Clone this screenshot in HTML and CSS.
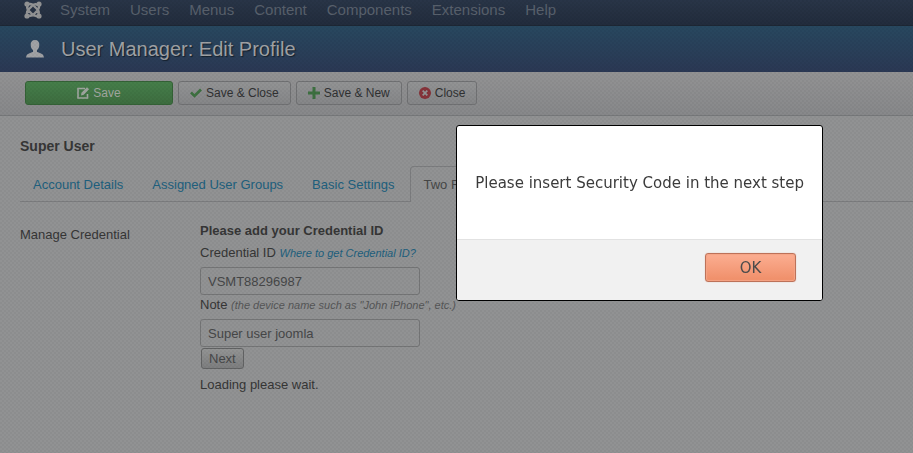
FILE: index.html
```html
<!DOCTYPE html>
<html lang="en">
<head>
<meta charset="utf-8">
<title>User Manager: Edit Profile</title>
<link rel="stylesheet" href="styles.css">
</head>
<body>
<nav class="navbar">
  <a class="brand" href="#" aria-label="Joomla">
    <svg viewBox="0 0 18 18" width="18" height="18" fill="none" stroke="currentColor" stroke-width="2.400">
      <path d="M3 14V12Q3 10 5 8L8 5Q11 2 14 4M4 3H6Q8 3 10 5L13 8Q16 11 14 14M15 4V6Q15 8 13 10L10 13Q7 16 4 14M14 15H12Q10 15 8 13L5 10Q2 7 4 4"/>
      <g fill="currentColor" stroke="none"><circle cx="3" cy="3" r="2.6"/><circle cx="15" cy="3" r="2.6"/><circle cx="3" cy="15" r="2.6"/><circle cx="15" cy="15" r="2.6"/></g>
    </svg>
  </a>
  <a href="#">System</a><a href="#">Users</a><a href="#">Menus</a><a href="#">Content</a><a href="#">Components</a><a href="#">Extensions</a><a href="#">Help</a>
</nav>
<header class="header">
  <svg class="user-icon" viewBox="0 0 18 18" width="18" height="18" fill="currentColor"><path d="M9 0C6 0 4.500 2 4.700 5C4.800 7.500 5.800 9.200 7 10V12C4 13 .5 13.500 0 17.500H18C17.500 13.500 14 13 11 12V10C12.200 9.200 13.200 7.500 13.300 5C13.500 2 12 0 9 0Z"/></svg>
  <h1>User Manager: Edit Profile</h1>
</header>
<div class="toolbar">
  <button class="btn btn-save" type="button"><svg viewBox="0 0 12 12" width="12" height="12"><path d="M8 1.500H1V11H10.500V7" fill="none" stroke="currentColor" stroke-width="1.600"/><path d="M4 8.500L4.500 5.800L10 .3L12 2.300L6.700 7.800Z" fill="currentColor"/></svg>Save</button>
  <button class="btn" type="button"><svg class="green" viewBox="0 0 12 12" width="12" height="12"><path d="M1 5.500L4.500 9L11 2.500" fill="none" stroke="currentColor" stroke-width="2.600"/></svg>Save &amp; Close</button>
  <button class="btn" type="button"><svg class="green" viewBox="0 0 12 12" width="12" height="12"><path d="M6 0V12M0 6H12" stroke="currentColor" stroke-width="3"/></svg>Save &amp; New</button>
  <button class="btn" type="button"><svg class="red" viewBox="0 0 12 12" width="12" height="12"><circle cx="6" cy="6" r="6" fill="currentColor"/><path class="cross" d="M3.700 3.700L8.300 8.300M8.300 3.700L3.700 8.300" stroke-width="1.800"/></svg>Close</button>
</div>
<main class="content">
  <h2>Super User</h2>
  <div class="tabs">
    <a href="#">Account Details</a><a href="#">Assigned User Groups</a><a href="#">Basic Settings</a><a class="active" href="#">Two Factor</a>
  </div>
  <div class="row">
    <div class="row-title">Manage Credential</div>
    <form class="fields">
      <strong>Please add your Credential ID</strong>
      <div class="line"><label for="credential">Credential ID</label> <a class="hint" href="#">Where to get Credential ID?</a></div>
      <input id="credential" type="text" value="VSMT88296987">
      <div class="line"><label for="note">Note</label> <span class="hint">(the device name such as "John iPhone", etc.)</span></div>
      <input id="note" type="text" value="Super user joomla">
      <button class="next" type="button">Next</button>
      <p>Loading please wait.</p>
    </form>
  </div>
</main>
<div class="backdrop"></div>
<div class="dialog" role="alertdialog" aria-modal="true" aria-labelledby="message">
  <p id="message">Please insert Security Code in the next step</p>
  <div class="dialog-footer"><button type="button">OK</button></div>
</div>
</body>
</html>
```
FILE: styles.css
```css
* { box-sizing: border-box; }
body {
  margin: 0;
  min-height: 100vh;
  background: #919293;
  color: #363636;
  font: 13px/18px "Liberation Sans", Arial, sans-serif;
  overflow: hidden;
}
a { color: #20607e; text-decoration: none; }
h1, h2, p { margin: 0; }
button, input { font: inherit; margin: 0; }

.navbar {
  display: flex;
  gap: 20px;
  align-items: center;
  height: 26px;
  padding: 0 25px 6px;
  background: linear-gradient(#293548, #222c3c);
  border-bottom: 1px solid #1d2734;
  font-size: 15px;
}
.navbar a { color: #58606c; }
.navbar .brand { display: flex; width: 18px; margin: 0 -2px 0 -1px; color: #929394; }

.header {
  display: flex;
  align-items: center;
  gap: 17px;
  height: 46px;
  padding: 0 26px;
  background: linear-gradient(#28485f, #2b3854);
  color: #a0a2a5;
}
.header h1 { font-size: 20px; line-height: 24px; font-weight: normal; text-shadow: 1px 1px 1px #15202c; }

.toolbar {
  display: flex;
  gap: 5px;
  padding: 9px 25px 10px;
  background: linear-gradient(#929293, #87888a);
  border-bottom: 1px solid #76787a;
}
.btn {
  display: flex;
  align-items: center;
  justify-content: center;
  gap: 4px;
  height: 24px;
  padding: 0 11px;
  border: 1px solid #707173;
  border-radius: 3px;
  background: linear-gradient(#929394, #858688);
  color: #303132;
  font-size: 12px;
  white-space: nowrap;
}
.btn-save { width: 148px; border-color: #346236; background: linear-gradient(#467e4a, #3d6d40); color: #a0a6a0; }
.green { color: #3d7040; }
.red { color: #86333a; }
.cross { stroke: #929394; }

.content { padding: 20px 0 0 20px; }
.content h2 { font-size: 14px; line-height: 20px; }
.tabs { display: flex; gap: 3px; margin-top: 10px; border-bottom: 1px solid #7b7c7e; }
.tabs a { padding: 9px 12px 7px; border: 1px solid transparent; border-bottom: 0; white-space: nowrap; }
.tabs .active {
  margin-bottom: -1px;
  padding-bottom: 8px;
  border-color: #7b7c7e;
  border-radius: 4px 4px 0 0;
  background: #919293;
  color: #464747;
}
.row { display: flex; margin-top: 19px; }
.row-title { flex: 0 0 180px; padding-top: 5px; }
.fields { display: flex; flex-direction: column; align-items: flex-start; }
.fields strong { line-height: 20px; }
.line { padding: 3px 0 5px; line-height: 18px; }
.hint { font-size: 11px; font-style: italic; }
span.hint { color: #555657; }
.fields input {
  width: 220px;
  height: 28px;
  padding: 4px 7px;
  border: 1px solid #747576;
  border-radius: 3px;
  background: #919293;
  color: #464748;
}
.fields input + .line { padding: 1px 0 5px; }
.next {
  height: 21px;
  margin: 1px;
  padding: 0 7px;
  border: 1px solid #626364;
  border-radius: 3px;
  background: linear-gradient(#939494, #7d7e7f);
  color: #464748;
  line-height: 18px;
}
.fields p { margin-top: 6px; }

.backdrop {
  position: fixed;
  inset: 0;
  background: conic-gradient(rgb(0 0 0 / 3%) 25%, transparent 0 50%, rgb(0 0 0 / 3%) 0 75%, transparent 0) 0 0 / 4px 4px;
}
.dialog {
  position: fixed;
  top: 125px;
  right: 90px;
  border: 1px solid #000;
  border-radius: 3px;
  background: #fff;
  color: #3b3b3b;
  font: 15px/18px "DejaVu Sans", sans-serif;
  overflow: hidden;
}
.dialog p { padding: 48px 18px 47px; white-space: nowrap; }
.dialog-footer { display: flex; justify-content: flex-end; padding: 13px 26px 18px; border-top: 1px solid #e2e2e2; background: #f1f1f1; }
.dialog button {
  width: 91px;
  height: 29px;
  border: 1px solid #bd7259;
  border-radius: 3px;
  background: linear-gradient(#fcae92, #ef8e68);
  box-shadow: inset 0 0 1px 1px #f4a587, 0 0 1px #d79a86;
  color: #4b4b4b;
}
```
